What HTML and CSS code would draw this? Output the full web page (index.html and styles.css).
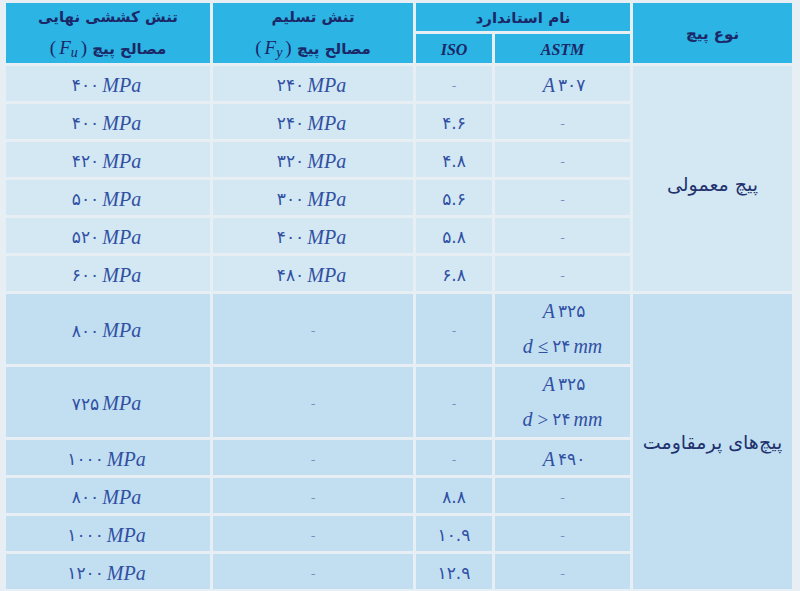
FILE: index.html
```html
<!DOCTYPE html>
<html lang="fa">
<head>
<meta charset="utf-8">
<title>جدول پیچ</title>
<link rel="stylesheet" href="styles.css">
</head>
<body>
<div class="sheet">
  <div class="hd h-type">نوع پیچ</div>
  <div class="hd h-std">نام استاندارد</div>
  <div class="hd h-two h-fy"><div class="l1">تنش تسلیم</div><div class="l2">مصالح پیچ <span class="lat" dir="ltr">(<i>F<sub>y</sub></i>)</span></div></div>
  <div class="hd h-two h-fu"><div class="l1">تنش کششی نهایی</div><div class="l2">مصالح پیچ <span class="lat" dir="ltr">(<i>F<sub>u</sub></i>)</span></div></div>
  <div class="hd h-lat h-astm">ASTM</div>
  <div class="hd h-lat h-iso">ISO</div>

  <div class="cell type type-a light">پیچ معمولی</div>
  <div class="cell type type-b mid">پیچ‌های پرمقاومت</div>

  <!-- row 1 -->
  <div class="cell light" dir="ltr"><i class="u">A</i> <span class="n">۳۰۷</span></div>
  <div class="cell light dash">-</div>
  <div class="cell light" dir="ltr"><span class="n">۲۴۰</span> <i class="u">MPa</i></div>
  <div class="cell light" dir="ltr"><span class="n">۴۰۰</span> <i class="u">MPa</i></div>
  <!-- row 2 -->
  <div class="cell light dash">-</div>
  <div class="cell light" dir="ltr"><span class="n">۴.۶</span></div>
  <div class="cell light" dir="ltr"><span class="n">۲۴۰</span> <i class="u">MPa</i></div>
  <div class="cell light" dir="ltr"><span class="n">۴۰۰</span> <i class="u">MPa</i></div>
  <!-- row 3 -->
  <div class="cell light dash">-</div>
  <div class="cell light" dir="ltr"><span class="n">۴.۸</span></div>
  <div class="cell light" dir="ltr"><span class="n">۳۲۰</span> <i class="u">MPa</i></div>
  <div class="cell light" dir="ltr"><span class="n">۴۲۰</span> <i class="u">MPa</i></div>
  <!-- row 4 -->
  <div class="cell light dash">-</div>
  <div class="cell light" dir="ltr"><span class="n">۵.۶</span></div>
  <div class="cell light" dir="ltr"><span class="n">۳۰۰</span> <i class="u">MPa</i></div>
  <div class="cell light" dir="ltr"><span class="n">۵۰۰</span> <i class="u">MPa</i></div>
  <!-- row 5 -->
  <div class="cell light dash">-</div>
  <div class="cell light" dir="ltr"><span class="n">۵.۸</span></div>
  <div class="cell light" dir="ltr"><span class="n">۴۰۰</span> <i class="u">MPa</i></div>
  <div class="cell light" dir="ltr"><span class="n">۵۲۰</span> <i class="u">MPa</i></div>
  <!-- row 6 -->
  <div class="cell light dash">-</div>
  <div class="cell light" dir="ltr"><span class="n">۶.۸</span></div>
  <div class="cell light" dir="ltr"><span class="n">۴۸۰</span> <i class="u">MPa</i></div>
  <div class="cell light" dir="ltr"><span class="n">۶۰۰</span> <i class="u">MPa</i></div>
  <!-- row 7 -->
  <div class="cell mid stack" dir="ltr"><div><i class="u">A</i> <span class="n">۳۲۵</span></div><div><i class="u">d</i> <span class="op">≤</span><span class="n">۲۴</span> <i class="u">mm</i></div></div>
  <div class="cell mid dash">-</div>
  <div class="cell mid dash">-</div>
  <div class="cell mid" dir="ltr"><span class="n">۸۰۰</span> <i class="u">MPa</i></div>
  <!-- row 8 -->
  <div class="cell mid stack" dir="ltr"><div><i class="u">A</i> <span class="n">۳۲۵</span></div><div><i class="u">d</i> <span class="op">&gt;</span> <span class="n">۲۴</span> <i class="u">mm</i></div></div>
  <div class="cell mid dash">-</div>
  <div class="cell mid dash">-</div>
  <div class="cell mid" dir="ltr"><span class="n">۷۲۵</span> <i class="u">MPa</i></div>
  <!-- row 9 -->
  <div class="cell mid" dir="ltr"><i class="u">A</i> <span class="n">۴۹۰</span></div>
  <div class="cell mid dash">-</div>
  <div class="cell mid dash">-</div>
  <div class="cell mid" dir="ltr"><span class="n">۱۰۰۰</span> <i class="u">MPa</i></div>
  <!-- row 10 -->
  <div class="cell mid dash">-</div>
  <div class="cell mid" dir="ltr"><span class="n">۸.۸</span></div>
  <div class="cell mid dash">-</div>
  <div class="cell mid" dir="ltr"><span class="n">۸۰۰</span> <i class="u">MPa</i></div>
  <!-- row 11 -->
  <div class="cell mid dash">-</div>
  <div class="cell mid" dir="ltr"><span class="n">۱۰.۹</span></div>
  <div class="cell mid dash">-</div>
  <div class="cell mid" dir="ltr"><span class="n">۱۰۰۰</span> <i class="u">MPa</i></div>
  <!-- row 12 -->
  <div class="cell mid dash">-</div>
  <div class="cell mid" dir="ltr"><span class="n">۱۲.۹</span></div>
  <div class="cell mid dash">-</div>
  <div class="cell mid" dir="ltr"><span class="n">۱۲۰۰</span> <i class="u">MPa</i></div>
</div>
</body>
</html>
```
FILE: styles.css
```css
html, body {
  margin: 0;
  padding: 0;
}
body {
  width: 800px;
  height: 591px;
  overflow: hidden;
  background: #e7eff4;
  font-family: "DejaVu Sans", sans-serif;
}
.sheet {
  display: grid;
  direction: rtl;
  width: 786px;
  margin: 3px 0 0 6px;
  grid-template-columns: 159px 135px 76px 200px 204px;
  grid-template-rows: 28px 29px repeat(6, 35px) 70px 70px repeat(4, 35px);
  gap: 3px;
}
.hd {
  background: #2bb4e4;
  color: #1c2767;
  font-weight: bold;
  font-size: 15px;
  display: flex;
  align-items: center;
  justify-content: center;
}
.h-type { grid-row: 1 / span 2; grid-column: 1; padding-top: 2px; }
.h-std { grid-row: 1; grid-column: 2 / span 2; padding-top: 2px; }
.h-fy { grid-column: 4; }
.h-fu { grid-column: 5; }
.h-astm { grid-row: 2; grid-column: 2; }
.h-iso { grid-row: 2; grid-column: 3; }
.h-two {
  grid-row: 1 / span 2;
  flex-direction: column;
  justify-content: flex-start;
}
.h-two .l1 {
  height: 28px;
  line-height: 28px;
}
.h-two .l2 {
  height: 32px;
  line-height: 34px;
}
.lat {
  font-family: "Liberation Serif", serif;
  font-size: 19px;
  font-weight: normal;
}
.lat i {
  font-style: italic;
  margin: 0 3px;
}
.lat sub {
  font-size: 14px;
  vertical-align: -3px;
}
.h-lat {
  font-family: "Liberation Serif", serif;
  font-style: italic;
  font-size: 16px;
  padding-top: 2px;
}
.cell {
  display: flex;
  align-items: center;
  justify-content: center;
  color: #3150a3;
  font-size: 16px;
  padding-top: 3px;
  box-sizing: border-box;
}
.light { background: #d3e8f3; }
.mid { background: #c1dff1; }
.type {
  grid-column: 1;
  font-size: 19px;
  color: #22316d;
}
.type-a { grid-row: 3 / span 6; padding-top: 10px; }
.type-b { grid-row: 9 / span 6; padding-top: 0; }
.n {
  font-family: "DejaVu Sans", sans-serif;
  font-size: 17px;
  letter-spacing: 2px;
}
.u {
  font-family: "Liberation Serif", serif;
  font-style: italic;
  font-size: 20px;
  margin: 0 3px;
}
.op {
  font-family: "Liberation Serif", serif;
  font-size: 19px;
  margin: 0 4px 0 2px;
}
.dash {
  color: #7690c0;
  font-size: 13px;
}
.stack {
  flex-direction: column;
  line-height: 35px;
  padding-top: 0;
}
.stack > div {
  height: 35px;
  display: flex;
  align-items: center;
  justify-content: center;
}
```
